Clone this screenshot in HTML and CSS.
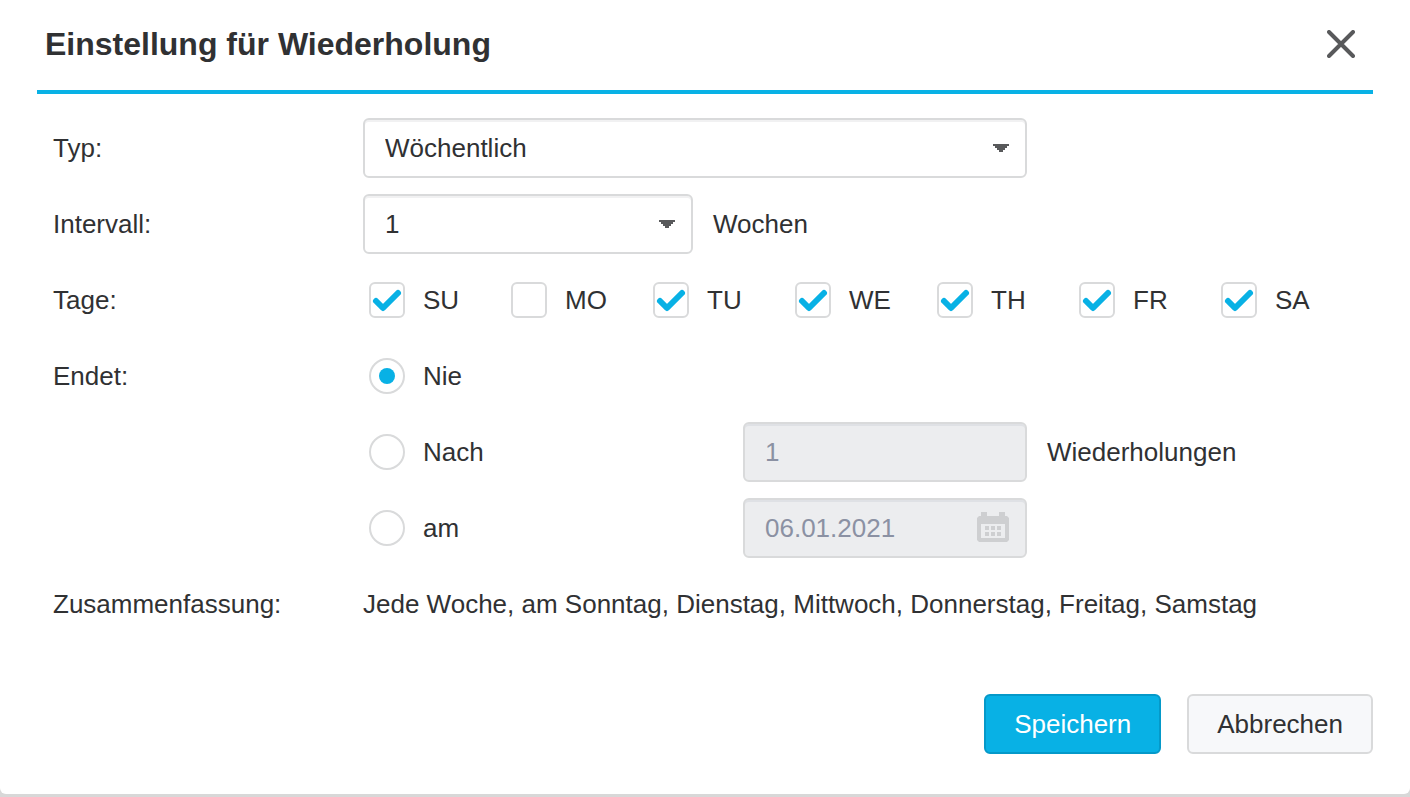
FILE: index.html
```html
<!DOCTYPE html>
<html lang="de">
<head>
    <meta charset="UTF-8">
    <meta name="viewport" content="width=device-width, initial-scale=1.0">
    <title>Einstellung für Wiederholung</title>
    <link rel="stylesheet" href="styles.css">
</head>
<body>
    <form class="dialog" role="dialog" aria-labelledby="dialog-title">
        <header class="dialog-header">
            <h1 id="dialog-title">Einstellung für Wiederholung</h1>
            <button type="button" class="close" aria-label="Schließen">
                <svg width="28" height="28" viewBox="0 0 28 28" fill="none" stroke="currentColor" stroke-width="4" stroke-linecap="round">
                    <path d="M2 2l24 24M26 2L2 26"></path>
                </svg>
            </button>
        </header>

        <div class="rows">
            <div class="row">
                <label class="row-label" for="type">Typ:</label>
                <div class="select select-wide">
                    <select id="type">
                        <option>Täglich</option>
                        <option selected>Wöchentlich</option>
                        <option>Monatlich</option>
                    </select>
                    <svg class="arrow" width="16" height="8" viewBox="0 0 16 8"><path d="M0 0h16v2h-2v2h-2v2h-2v2H6V6H4V4H2V2H0z"></path></svg>
                </div>
            </div>

            <div class="row">
                <label class="row-label" for="interval">Intervall:</label>
                <div class="select">
                    <select id="interval">
                        <option selected>1</option>
                        <option>2</option>
                        <option>3</option>
                    </select>
                    <svg class="arrow" width="16" height="8" viewBox="0 0 16 8"><path d="M0 0h16v2h-2v2h-2v2h-2v2H6V6H4V4H2V2H0z"></path></svg>
                </div>
                <span class="unit">Wochen</span>
            </div>

            <div class="row" role="group" aria-labelledby="days-label">
                <span class="row-label" id="days-label">Tage:</span>
                <div class="days">
                    <label class="option"><input type="checkbox" checked>SU</label>
                    <label class="option"><input type="checkbox">MO</label>
                    <label class="option"><input type="checkbox" checked>TU</label>
                    <label class="option"><input type="checkbox" checked>WE</label>
                    <label class="option"><input type="checkbox" checked>TH</label>
                    <label class="option"><input type="checkbox" checked>FR</label>
                    <label class="option"><input type="checkbox" checked>SA</label>
                </div>
            </div>

            <div class="row">
                <span class="row-label">Endet:</span>
                <label class="option end"><input type="radio" name="end" checked>Nie</label>
            </div>

            <div class="row">
                <span class="row-label"></span>
                <label class="option end"><input type="radio" name="end">Nach</label>
                <div class="field">
                    <input type="text" id="count" value="1" disabled>
                </div>
                <label class="unit" for="count">Wiederholungen</label>
            </div>

            <div class="row">
                <span class="row-label"></span>
                <label class="option end"><input type="radio" name="end">am</label>
                <div class="field">
                    <input type="text" value="06.01.2021" aria-label="Enddatum" disabled>
                    <svg class="calendar" width="32" height="30" viewBox="0 0 32 30" fill="currentColor">
                        <path fill-rule="evenodd" d="M4 0h6v4h12V0h6v4h2l2 2v22l-2 2H2l-2-2V6l2-2h2zM4 12v14h24V12z"></path>
                        <path d="M8 14h4v4H8zM14 14h4v4h-4zM20 14h4v4h-4zM8 20h4v4H8zM14 20h4v4h-4zM20 20h4v4h-4z"></path>
                    </svg>
                </div>
            </div>

            <div class="row">
                <span class="row-label">Zusammenfassung:</span>
                <output>Jede Woche, am Sonntag, Dienstag, Mittwoch, Donnerstag, Freitag, Samstag</output>
            </div>
        </div>

        <footer class="actions">
            <button type="submit" class="button primary">Speichern</button>
            <button type="button" class="button">Abbrechen</button>
        </footer>
    </form>
</body>
</html>
```
FILE: styles.css
```css
:root {
    --primary: #08b1e5;
    --primary-dark: #0599c9;
    --border: #d9dadb;
    --text: #303133;
    --icon: #58595b;
}

* {
    box-sizing: border-box;
}

body {
    margin: 0;
    background-color: #d8d8d8;
    color: var(--text);
    font-family: "Liberation Sans", Arial, sans-serif;
    font-size: 26px;
    line-height: 30px;
}

input,
select,
button {
    margin: 0;
    color: inherit;
    font: inherit;
}

.dialog {
    padding: 0 37px 40px;
    border-radius: 0 0 6px 6px;
    background-color: #ffffff;
}

.dialog-header {
    display: flex;
    align-items: center;
    justify-content: space-between;
    padding: 24px 12px 26px 8px;
    border-bottom: 4px solid var(--primary);
}

h1 {
    margin: 0;
    font-size: 32px;
    line-height: 40px;
    font-weight: 700;
}

.close {
    display: flex;
    align-items: center;
    justify-content: center;
    width: 40px;
    height: 40px;
    padding: 0;
    border: none;
    background: none;
    color: var(--icon);
    cursor: pointer;
}

.rows {
    display: flex;
    flex-direction: column;
    gap: 16px;
    padding: 24px 0 60px 16px;
}

.row {
    display: flex;
    align-items: center;
    min-height: 60px;
}

.row-label {
    flex: 0 0 310px;
}

.select,
.field {
    position: relative;
    width: 330px;
}

.select-wide {
    width: 664px;
}

.field {
    width: 284px;
}

.select select,
.field input {
    display: block;
    width: 100%;
    height: 60px;
    padding: 0 20px;
    border: 2px solid var(--border);
    border-radius: 6px;
    background-color: #ffffff;
    box-shadow: inset 0 2px 0 #f1f1f2;
    appearance: none;
}

.field input:disabled {
    background-color: #ecedef;
    box-shadow: inset 0 2px 0 #dfe1e5;
    color: #8b91a3;
}

.arrow {
    position: absolute;
    top: 26px;
    right: 18px;
    fill: var(--icon);
    pointer-events: none;
}

.calendar {
    position: absolute;
    top: 14px;
    right: 18px;
    color: #cecfd1;
    pointer-events: none;
}

.unit {
    margin-left: 20px;
}

.days {
    display: flex;
}

.option {
    display: flex;
    flex: 0 0 142px;
    align-items: center;
    gap: 18px;
    padding-left: 6px;
}

.option.end {
    flex-basis: 380px;
}

.option input {
    flex: none;
    width: 36px;
    height: 36px;
    border: 2px solid var(--border);
    border-radius: 6px;
    background: #ffffff center / 36px 36px no-repeat;
    appearance: none;
}

.option input[type="radio"] {
    border-radius: 50%;
}

.option input[type="checkbox"]:checked {
    background-image: url("data:image/svg+xml,%3Csvg xmlns='http://www.w3.org/2000/svg' viewBox='0 0 36 36'%3E%3Cpath d='M7 19l7 7L29 11' fill='none' stroke='%2308b1e5' stroke-width='6' stroke-linecap='round' stroke-linejoin='round'/%3E%3C/svg%3E");
}

.option input[type="radio"]:checked {
    background-image: url("data:image/svg+xml,%3Csvg xmlns='http://www.w3.org/2000/svg' viewBox='0 0 36 36'%3E%3Ccircle cx='18' cy='18' r='8' fill='%2308b1e5'/%3E%3C/svg%3E");
}

.actions {
    display: flex;
    justify-content: flex-end;
    gap: 26px;
}

.button {
    height: 60px;
    padding: 0 28px;
    border: 2px solid var(--border);
    border-radius: 6px;
    background-color: #f7f8fa;
    cursor: pointer;
}

.button.primary {
    border-color: var(--primary-dark);
    background-color: var(--primary);
    color: #ffffff;
}
```
